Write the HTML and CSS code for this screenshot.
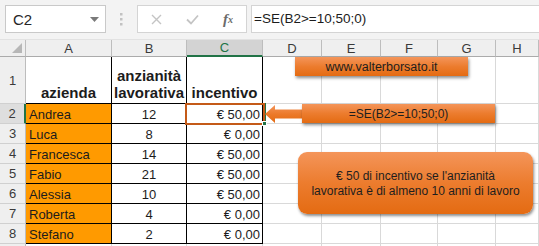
FILE: index.html
```html
<!DOCTYPE html>
<html lang="it">
<head>
<meta charset="utf-8">
<title>SE - incentivo</title>
<link rel="stylesheet" href="styles.css">
</head>
<body>
<div class="app">
  <div class="fbar">
    <div class="namebox">
      <span>C2</span>
      <svg class="dd" width="9" height="5" viewBox="0 0 9 5"><polygon points="0,0 9,0 4.5,5" fill="#7a7a7a"/></svg>
    </div>
    <div class="grip">
      <svg width="3" height="13" viewBox="0 0 3 13"><rect x="0" y="0" width="2.5" height="2.5" fill="#c2c2c2"/><rect x="0" y="5" width="2.5" height="2.5" fill="#c2c2c2"/><rect x="0" y="10" width="2.5" height="2.5" fill="#c2c2c2"/></svg>
    </div>
    <div class="fbtns">
      <span class="fb fb-x"><svg width="11" height="11" viewBox="0 0 11 11"><path d="M1 1 L10 10 M10 1 L1 10" stroke="#c4c4c4" stroke-width="1.4" fill="none"/></svg></span>
      <span class="fb fb-ok"><svg width="13" height="11" viewBox="0 0 13 11"><path d="M1 5.5 L5 9.5 L12 1.5" stroke="#c4c4c4" stroke-width="1.8" fill="none"/></svg></span>
      <span class="fb fb-fx"><i>f</i><sub>x</sub></span>
    </div>
    <div class="finput">=SE(B2&gt;=10;50;0)</div>
  </div>

  <div class="sheet">
    <div class="h corner"><span class="tri"></span></div>
    <div class="h col">A</div>
    <div class="h col">B</div>
    <div class="h col col-sel">C</div>
    <div class="h col">D</div>
    <div class="h col">E</div>
    <div class="h col">F</div>
    <div class="h col">G</div>
    <div class="h col">H</div>

    <div class="h row">1</div>
    <div class="c tb th">azienda</div>
    <div class="c tb th">anzianità<br>lavorativa</div>
    <div class="c tb th">incentivo</div>
    <div class="c"></div><div class="c"></div><div class="c"></div><div class="c"></div><div class="c"></div>

    <div class="h row row-sel">2</div>
    <div class="c tb or">Andrea</div>
    <div class="c tb num">12</div>
    <div class="c tb eur">€ 50,00</div>
    <div class="c"></div><div class="c"></div><div class="c"></div><div class="c"></div><div class="c"></div>

    <div class="h row">3</div>
    <div class="c tb or">Luca</div>
    <div class="c tb num">8</div>
    <div class="c tb eur">€ 0,00</div>
    <div class="c"></div><div class="c"></div><div class="c"></div><div class="c"></div><div class="c"></div>

    <div class="h row">4</div>
    <div class="c tb or">Francesca</div>
    <div class="c tb num">14</div>
    <div class="c tb eur">€ 50,00</div>
    <div class="c"></div><div class="c"></div><div class="c"></div><div class="c"></div><div class="c"></div>

    <div class="h row">5</div>
    <div class="c tb or">Fabio</div>
    <div class="c tb num">21</div>
    <div class="c tb eur">€ 50,00</div>
    <div class="c"></div><div class="c"></div><div class="c"></div><div class="c"></div><div class="c"></div>

    <div class="h row">6</div>
    <div class="c tb or">Alessia</div>
    <div class="c tb num">10</div>
    <div class="c tb eur">€ 50,00</div>
    <div class="c"></div><div class="c"></div><div class="c"></div><div class="c"></div><div class="c"></div>

    <div class="h row">7</div>
    <div class="c tb or">Roberta</div>
    <div class="c tb num">4</div>
    <div class="c tb eur">€ 0,00</div>
    <div class="c"></div><div class="c"></div><div class="c"></div><div class="c"></div><div class="c"></div>

    <div class="h row">8</div>
    <div class="c tb or">Stefano</div>
    <div class="c tb num">2</div>
    <div class="c tb eur">€ 0,00</div>
    <div class="c"></div><div class="c"></div><div class="c"></div><div class="c"></div><div class="c"></div>

    <div class="h row"></div>
    <div class="c"></div><div class="c"></div><div class="c"></div>
    <div class="c"></div><div class="c"></div><div class="c"></div><div class="c"></div><div class="c"></div>
  </div>

  <div class="sel"></div>
  <div class="sel-edge"></div>
  <div class="sel-handle"></div>

  <div class="shape shape-url">www.valterborsato.it</div>
  <svg class="arrow" width="40" height="20" viewBox="0 0 40 20">
    <defs>
      <linearGradient id="ag" x1="0" y1="0" x2="0" y2="1">
        <stop offset="0" stop-color="#f4955a"/>
        <stop offset="0.5" stop-color="#ec7a2b"/>
        <stop offset="1" stop-color="#e36a10"/>
      </linearGradient>
    </defs>
    <polygon points="1,10 11,1 11,5.5 40,5.5 40,14.5 11,14.5 11,19" fill="url(#ag)"/>
  </svg>
  <div class="shape shape-formula">=SE(B2&gt;=10;50;0)</div>
  <div class="shape shape-note">€ 50 di incentivo se l'anzianità<br>lavorativa è di almeno 10 anni di lavoro</div>
</div>
</body>
</html>
```

FILE: styles.css
```css
* { box-sizing: border-box; }

body {
  margin: 0;
  font-family: "Liberation Sans", Arial, sans-serif;
  background: #ffffff;
  color: #1c1c1c;
}

.app {
  position: relative;
  width: 539px;
  height: 246px;
  overflow: hidden;
  background: #ffffff;
}

/* ---------- formula bar ---------- */
.fbar {
  height: 40px;
  background: #f3f3f3;
  display: flex;
  align-items: flex-start;
  padding: 5px 0 0 5px;
  border-bottom: 1px solid #e2e2e2;
}

.namebox {
  width: 101px;
  height: 28px;
  background: #ffffff;
  border: 1px solid #c9c9c9;
  display: flex;
  align-items: center;
  justify-content: space-between;
  padding: 0 6px 0 7px;
  font-size: 15px;
  color: #262626;
}

.grip {
  width: 31px;
  height: 28px;
  display: flex;
  align-items: center;
  justify-content: center;
}

.fbtns {
  width: 110px;
  height: 28px;
  background: #ffffff;
  border: 1px solid #d4d4d4;
  display: flex;
  align-items: center;
}

.fb {
  display: flex;
  align-items: center;
  justify-content: center;
  height: 26px;
}
.fb-x { width: 37px; }
.fb-ok { width: 35px; }
.fb-fx {
  width: 36px;
  font-family: "Liberation Serif", "Times New Roman", serif;
  color: #6b6b6b;
  font-size: 15px;
  font-weight: bold;
}
.fb-fx i { font-style: italic; }
.fb-fx sub { font-size: 10px; font-style: italic; vertical-align: -1px; }

.finput {
  flex: 1;
  height: 28px;
  margin-left: 4px;
  background: #ffffff;
  border: 1px solid #d4d4d4;
  border-right: none;
  padding: 0 0 0 2px;
  font-size: 13.5px;
  line-height: 26px;
  color: #1c1c1c;
  white-space: nowrap;
}

/* ---------- sheet grid ---------- */
.sheet {
  display: grid;
  grid-template-columns: 26px 86px 75px 76px 59px 59px 57px 58px 1fr;
  grid-template-rows: 17px 47px repeat(9, 20px);
}

.h {
  background: #efefef;
  border-right: 1px solid #bdbdbd;
  border-bottom: 1px solid #ababab;
  color: #3a3a3a;
  font-size: 13px;
  display: flex;
  align-items: center;
  justify-content: center;
}

.corner {
  position: relative;
}
.tri {
  position: absolute;
  right: 3px;
  bottom: 3px;
  width: 0;
  height: 0;
  border-left: 10px solid transparent;
  border-bottom: 10px solid #b7b7b7;
}

.col-sel {
  background: #d3d3d3;
  color: #217346;
  border-bottom: 2px solid #217346;
}

.row { border-bottom-color: #d0d0d0; }
.row-sel {
  background: #dedede;
  border-right: 2px solid #217346;
}

.c {
  border-right: 1px solid #d9d9d9;
  border-bottom: 1px solid #d9d9d9;
  font-size: 13px;
  display: flex;
  align-items: center;
  padding: 1px 3px 0;
  white-space: nowrap;
  color: #1c1c1c;
}

.tb {
  border-right-color: #000000;
  border-bottom-color: #000000;
}

.th {
  font-weight: bold;
  font-size: 15px;
  line-height: 17px;
  text-align: center;
  justify-content: center;
  align-items: flex-end;
  padding-bottom: 2px;
}

.or { background: #ff9a00; }
.num { justify-content: center; }
.eur { justify-content: flex-end; padding-right: 2px; }

/* ---------- selection ---------- */
.sel {
  position: absolute;
  left: 185px;
  top: 103px;
  width: 80px;
  height: 22px;
  border: 2px solid #c45a18;
}
.sel-edge {
  position: absolute;
  left: 265px;
  top: 103px;
  width: 1px;
  height: 19px;
  background: #217346;
}
.sel-handle {
  position: absolute;
  left: 262px;
  top: 121px;
  width: 5px;
  height: 5px;
  background: #217346;
  border: 1px solid #ffffff;
}

/* ---------- shapes ---------- */
.shape {
  position: absolute;
  display: flex;
  align-items: center;
  justify-content: center;
  text-align: center;
  color: #1e1e1e;
  background: linear-gradient(to bottom, #f4955a 0%, #ec7c2e 50%, #e46b12 100%);
  box-shadow: 1px 2px 3px rgba(0, 0, 0, 0.45);
  white-space: nowrap;
}

.shape-url {
  left: 295px;
  top: 57px;
  width: 173px;
  height: 19px;
  font-size: 12.5px;
}

.shape-formula {
  left: 302px;
  top: 104px;
  width: 193px;
  height: 19px;
  font-size: 12px;
}

.arrow {
  position: absolute;
  left: 264px;
  top: 104px;
}

.shape-note {
  left: 298px;
  top: 152px;
  width: 235px;
  height: 62px;
  border-radius: 9px;
  font-size: 12px;
  line-height: 15px;
  padding-top: 2px;
}
```
